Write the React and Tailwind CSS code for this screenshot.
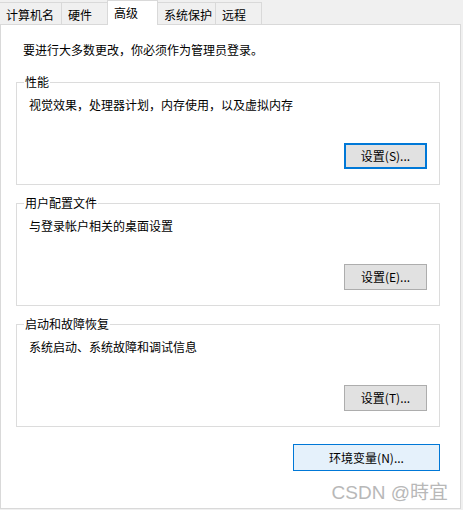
import React from "react";

const font = { fontFamily: '"Noto Sans CJK SC", "Noto Sans", sans-serif' };

const tabs = [
  { label: "计算机名", w: "w-[62px]" },
  { label: "硬件", w: "w-[47px]" },
  { label: "高级", w: "w-[51px]", active: true },
  { label: "系统保护", w: "w-[59px]" },
  { label: "远程", w: "w-[47px]" },
];

const groups = [
  { title: "性能", desc: "视觉效果，处理器计划，内存使用，以及虚拟内存", button: "设置(S)...", focused: true },
  { title: "用户配置文件", desc: "与登录帐户相关的桌面设置", button: "设置(E)..." },
  { title: "启动和故障恢复", desc: "系统启动、系统故障和调试信息", button: "设置(T)..." },
];

function Group({ title, desc, button, focused }) {
  return (
    <fieldset className="w-[424px] border border-[#dcdcdc] px-[7px] pb-[15px] mt-[10px] first:mt-0">
      <legend className="px-[1px] h-[16px] leading-[16px]">{title}</legend>
      <div className="pl-[5px] pt-[6px] leading-[17px]">{desc}</div>
      <div className="flex justify-end pr-[5px] mt-[30px]">
        <button
          className={
            "w-[83px] h-[26px] bg-[#e1e1e1] leading-none " +
            (focused ? "border-2 border-[#0078d7]" : "border border-[#adadad]")
          }
        >
          {button}
        </button>
      </div>
    </fieldset>
  );
}

export default function App() {
  return (
    <div className="w-[463px] h-[510px] bg-[#f0f0f0] text-[12px] text-black overflow-hidden" style={font}>
      {/* tab strip */}
      <div className="flex items-end h-[24px]">
        {tabs.map((t, i) => (
          <div
            key={t.label}
            className={
              t.w +
              " border-t border-x border-[#d9d9d9] pl-[6px] " +
              (i > 0 ? "-ml-px " : "border-l-0 ") +
              (t.active
                ? "h-[25px] -mb-px relative z-10 bg-white pt-[3px]"
                : "h-[22px] bg-[#f0f0f0] pt-[3px]")
            }
          >
            {t.label}
          </div>
        ))}
      </div>

      {/* page */}
      <div className="relative w-[461px] h-[485px] bg-white border border-[#d9d9d9] pl-[15px] pt-[16px]">
        <div className="pl-[7px] leading-[17px]">要进行大多数更改，你必须作为管理员登录。</div>

        <div className="mt-[16px] flex flex-col">
          {groups.map((g) => (
            <Group key={g.title} {...g} />
          ))}
        </div>

        <div className="w-[424px] flex justify-end mt-[17px]">
          <button className="w-[147px] h-[27px] bg-[#e5f1fb] border border-[#0078d7]">环境变量(N)...</button>
        </div>

        {/* watermark */}
        <div
          className="absolute right-[12px] bottom-[6px] text-[19px] text-[#b8b8b8] leading-none"
          style={{ fontFamily: '"Liberation Sans", "Noto Sans CJK TC", sans-serif' }}
        >
          CSDN @時宜
        </div>
      </div>
    </div>
  );
}
